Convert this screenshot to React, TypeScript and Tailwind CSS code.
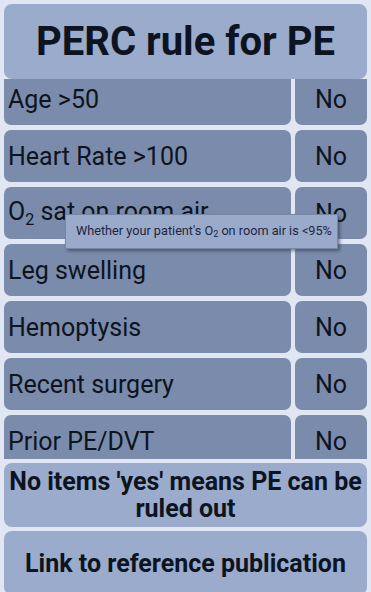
import React from "react";

const rows: { label: React.ReactNode; key: string }[] = [
  { key: "age", label: "Age >50" },
  { key: "hr", label: "Heart Rate >100" },
  {
    key: "o2",
    label: (
      <>
        O<span className="text-[16px] align-[-5px]">2</span> sat on room air
      </>
    ),
  },
  { key: "leg", label: "Leg swelling" },
  { key: "hemo", label: "Hemoptysis" },
  { key: "surg", label: "Recent surgery" },
  { key: "prior", label: "Prior PE/DVT" },
];

export default function App() {
  return (
    <div
      className="relative w-[371px] h-[592px] overflow-hidden bg-[#e0e7f3] flex flex-col px-[4px] pt-[4px] text-[#0c1421]"
      style={{ fontFamily: "Roboto, 'Noto Sans', sans-serif" }}
    >
      <div className="relative z-10 h-[75px] shrink-0 rounded-[8px] bg-[#9aabcc] flex items-center justify-center">
        <span className="text-[40px] font-bold leading-none">PERC rule for PE</span>
      </div>
      <div className="h-[380px] shrink-0 overflow-hidden">
        <div className="flex flex-col gap-[5px] mt-[-6px]">
          {rows.map((r) => (
            <div key={r.key} className="h-[52px] shrink-0 flex gap-[4px]">
              <div className="flex-1 rounded-[7px] bg-[#7b8bab] flex items-center pl-[4px] text-[25px] leading-none whitespace-nowrap">
                <span>{r.label}</span>
              </div>
              <div className="w-[72px] rounded-[7px] bg-[#7b8bab] flex items-center justify-center text-[25px] leading-none">
                No
              </div>
            </div>
          ))}
        </div>
      </div>
      <div className="mt-[4px] h-[64px] shrink-0 rounded-[8px] bg-[#9aabcc] flex items-center justify-center text-center">
        <span className="text-[25px] font-bold leading-[27px]">
          No items 'yes' means PE can be
          <br />
          ruled out
        </span>
      </div>
      <div className="mt-[4px] h-[64px] shrink-0 rounded-[8px] bg-[#9aabcc] flex items-center justify-center">
        <span className="text-[25px] font-bold leading-none">Link to reference publication</span>
      </div>

      <div className="absolute z-20 left-[65px] top-[214px] w-[273px] h-[35px] bg-[#9aaacb] border border-[#7786a3] shadow-[2px_2px_3px_rgba(40,50,70,0.55)] flex items-center pl-[10px]">
        <span className="text-[12.7px] leading-none text-[#1e2540] whitespace-nowrap">
          Whether your patient's O<span className="text-[9px] align-[-2px]">2</span> on room air is &lt;95%
        </span>
      </div>
    </div>
  );
}
